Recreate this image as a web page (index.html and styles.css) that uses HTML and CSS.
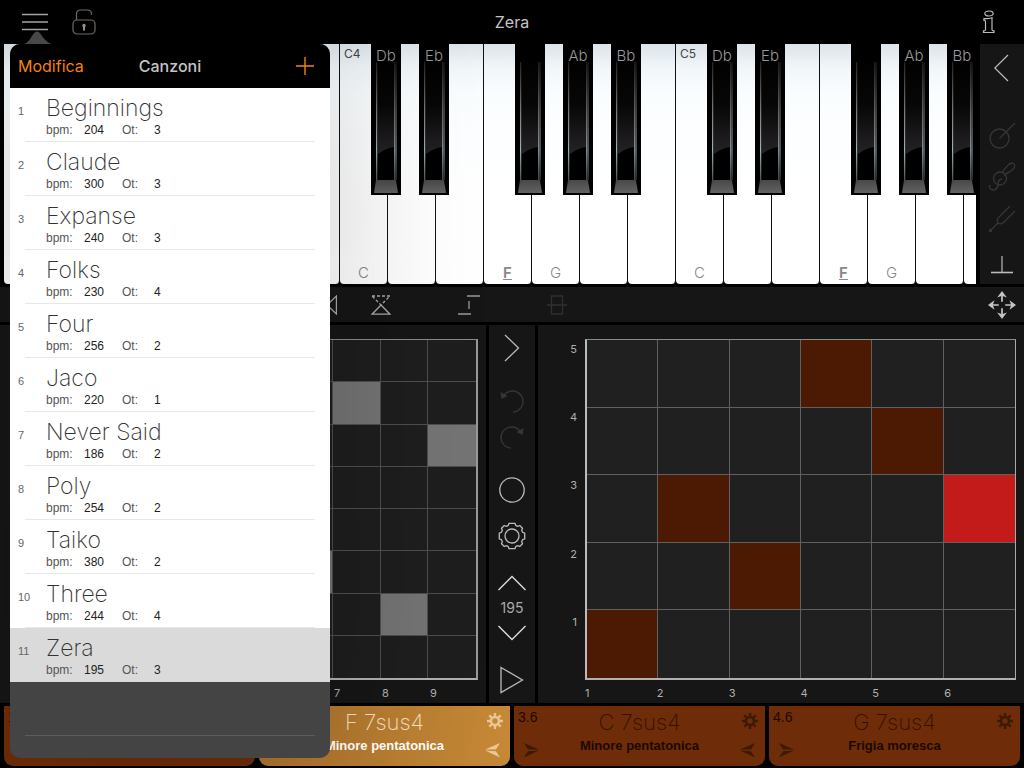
FILE: index.html
```html
<!DOCTYPE html>
<html lang="it">
<head>
<meta charset="utf-8">
<meta name="viewport" content="width=device-width, initial-scale=1">
<title>Zera</title>
<link rel="stylesheet" href="styles.css">
</head>
<body>
<svg class="defs" width="0" height="0" aria-hidden="true">
  <symbol id="cog" viewBox="0 0 16 16"><g fill="none" stroke="currentColor"><circle cx="8" cy="8" r="4" stroke-width="2.6"/><path stroke-width="2.4" d="M8 0v3M8 13v3M0 8h3M13 8h3M2.3 2.3l2.2 2.2M11.5 11.5l2.2 2.2M13.7 2.3l-2.2 2.2M4.5 11.5l-2.2 2.2"/></g></symbol>
  <symbol id="dart" viewBox="0 0 16 16"><path fill="currentColor" d="M0 1L15 7.500H4zM0 15.500L4 9.300L15 8.500z"/></symbol>
  <symbol id="ebony" viewBox="0 0 30 151" preserveAspectRatio="none">
    <path fill="#000" d="M0 0h30v151H0z"/>
    <path fill="url(#gloss)" d="M7 12h16v91q-8 1-16 7z"/>
    <path fill="url(#edge)" d="M5 18h1.300v118H5zM23.200 18h1.300v118h-1.300z"/>
    <path fill="url(#edge)" opacity=".5" d="M25 18h1v118h-1z"/>
    <path fill="url(#lip)" d="M5 136h20l2 13H3z"/>
  </symbol>
  <linearGradient id="gloss" x1="0" y1="0" x2="0" y2="1"><stop offset="0" stop-color="#000"/><stop offset=".5" stop-color="#070707"/><stop offset="1" stop-color="#262324"/></linearGradient>
  <linearGradient id="edge" x1="0" y1="0" x2="0" y2="1"><stop offset="0" stop-color="#222"/><stop offset=".4" stop-color="#777"/><stop offset=".75" stop-color="#9fb0b8"/><stop offset="1" stop-color="#4e5458"/></linearGradient>
  <linearGradient id="lip" x1="0" y1="0" x2="0" y2="1"><stop offset="0" stop-color="#494747"/><stop offset="1" stop-color="#636161"/></linearGradient>
</svg>

<header class="topbar">
  <div class="topbar-side">
    <button class="icon-button" aria-label="Menu"><svg width="26" height="18" viewBox="0 0 26 18"><path d="M0 1.500h26M0 9h26M0 16.500h26" stroke="#aaa" stroke-width="1.300"/></svg></button>
    <button class="icon-button" aria-label="Blocco"><svg width="24" height="26" viewBox="0 0 24 26" fill="none" stroke="#7d706c" stroke-width="1.200"><rect x="1" y="11" width="22" height="14" rx="4"/><path d="M4.500 11V5q0-4 4-4h7q4 0 4 4v0.800"/><path d="M12 17v4.500" stroke="#a39996" stroke-width="2"/><circle cx="12" cy="16.500" r="1.700" fill="#a39996" stroke="none"/></svg></button>
  </div>
  <h1 class="topbar-title">Zera</h1>
  <div class="topbar-side topbar-end">
    <button class="icon-button" aria-label="Info"><svg width="14" height="24" viewBox="0 0 14 24" fill="none" stroke="#bbb" stroke-width="1.200"><ellipse cx="7" cy="3.500" rx="4.200" ry="2.500"/><path d="M2 8.500q4 .5 8-.8v12q0 1 2 1.200v1.600H1.500v-1.600q2-.2 2-1.200v-8.200q0-1.200-1.700-1.300z"/></svg></button>
  </div>
</header>

<section class="keys-row">
  <div class="keyboard">
    <div class="key"></div>
    <div class="key"><svg class="black"><use href="#ebony"/></svg></div>
    <div class="key"><svg class="black"><use href="#ebony"/></svg></div>
    <div class="key"></div>
    <div class="key"><svg class="black"><use href="#ebony"/></svg></div>
    <div class="key"><svg class="black"><use href="#ebony"/></svg></div>
    <div class="key"><svg class="black"><use href="#ebony"/></svg></div>
    <div class="key"><span class="octave">C4</span><span class="note">C</span></div>
    <div class="key"><svg class="black"><use href="#ebony"/></svg><span class="sharp">Db</span></div>
    <div class="key"><svg class="black"><use href="#ebony"/></svg><span class="sharp">Eb</span></div>
    <div class="key"><span class="note root">F</span></div>
    <div class="key"><svg class="black"><use href="#ebony"/></svg><span class="note">G</span></div>
    <div class="key"><svg class="black"><use href="#ebony"/></svg><span class="sharp">Ab</span></div>
    <div class="key"><svg class="black"><use href="#ebony"/></svg><span class="sharp">Bb</span></div>
    <div class="key"><span class="octave">C5</span><span class="note">C</span></div>
    <div class="key"><svg class="black"><use href="#ebony"/></svg><span class="sharp">Db</span></div>
    <div class="key"><svg class="black"><use href="#ebony"/></svg><span class="sharp">Eb</span></div>
    <div class="key"><span class="note root">F</span></div>
    <div class="key"><svg class="black"><use href="#ebony"/></svg><span class="note">G</span></div>
    <div class="key"><svg class="black"><use href="#ebony"/></svg><span class="sharp">Ab</span></div>
    <div class="key"><svg class="black"><use href="#ebony"/></svg><span class="sharp">Bb</span></div>
  </div>
  <nav class="side-tools" aria-label="Strumenti">
    <button class="tool tool-first" aria-label="Indietro"><svg width="16" height="28" viewBox="0 0 16 28" fill="none" stroke="#bbb" stroke-width="1.300"><path d="M14 1L.8 14L14 27"/></svg></button>
    <button class="tool" aria-label="Percussioni"><svg width="28" height="28" viewBox="0 0 28 28" fill="none" stroke="#363636" stroke-width="1.300"><circle cx="11.500" cy="17.500" r="9.500"/><path d="M11.500 17.500L27 2"/></svg></button>
    <button class="tool" aria-label="Basso"><svg width="28" height="30" viewBox="0 0 28 30" fill="none" stroke="#363636" stroke-width="1.300"><circle cx="12" cy="16.500" r="6.500"/><path d="M14.500 10.500q1-3 4-5.500q3-4 6-4q3 1 2 4q-1 3-5 5q-4 1-5 4"/><path d="M14 17q-4 0-4 6q-1 5-5 5q-5-1-3-5"/></svg></button>
    <button class="tool" aria-label="Accordatura"><svg width="28" height="28" viewBox="0 0 28 28" fill="none" stroke="#363636" stroke-width="1.300"><path d="M2 26l8-8M22 1L11 12q-3 3-1 6q3 2 6-1L27 6"/><circle cx="2.500" cy="25.500" r="1"/></svg></button>
    <button class="tool tool-last" aria-label="Base"><svg width="22" height="18" viewBox="0 0 22 18" fill="none" stroke="#bbb"><path d="M11 0v16" stroke-width="1.200"/><path d="M0 16.500h22" stroke-width="1.600"/></svg></button>
  </nav>
</section>

<div class="toolbar">
  <div class="toolbar-group">
    <button class="tool-inline" aria-label="Specchia"><svg width="20" height="20" viewBox="0 0 20 20" fill="none" stroke="#aaa" stroke-width="1.200"><path d="M19.400 1v18L10 10z"/><path d="M10 10L.6 1v18z" stroke-dasharray="2 2"/></svg></button>
    <button class="tool-inline" aria-label="Capovolgi"><svg width="20" height="20" viewBox="0 0 20 20" fill="none" stroke="#aaa" stroke-width="1.300"><path d="M1 19.200h18L10 10z"/><path d="M1 1h18L10 10z" stroke-dasharray="3 2"/></svg></button>
  </div>
  <button class="tool-inline" aria-label="Gradino"><svg width="22" height="20" viewBox="0 0 22 20" stroke="#999" stroke-width="1.300"><path d="M9 1h13M0 19h13M11 6v8"/></svg></button>
  <button class="tool-inline" aria-label="Centra"><svg width="20" height="20" viewBox="0 0 20 20" fill="none" stroke="#303030" stroke-width="1.300"><path d="M4.500 1h11v18h-11zM0 10h20"/></svg></button>
  <button class="tool-inline toolbar-last" aria-label="Sposta"><svg width="28" height="28" viewBox="0 0 26 26"><path d="M13 3v7M13 16v7M3 13h7M16 13h7" stroke="#c4c4c4" stroke-width="1.600"/><path fill="#c4c4c4" d="M13 0l4.500 6L13 4.500L8.500 6zM13 26l4.500-6L13 21.500L8.500 20zM0 13l6-4.500L4.500 13L6 17.500zM26 13l-6-4.500L21.500 13L20 17.500z"/></svg></button>
</div>

<main class="editor">
  <section class="panel pattern">
    <div class="grid grid-left">
      <i></i><i></i><i></i><i></i><i></i><i></i><i></i><i></i><i></i>
      <i></i><i></i><i></i><i></i><i></i><i></i><i class="grey"></i><i></i><i></i>
      <i></i><i></i><i></i><i></i><i></i><i></i><i></i><i></i><i class="grey"></i>
      <i></i><i></i><i></i><i></i><i></i><i></i><i></i><i></i><i></i>
      <i></i><i></i><i></i><i></i><i></i><i></i><i></i><i></i><i></i>
      <i></i><i></i><i></i><i></i><i></i><i class="grey"></i><i></i><i></i><i></i>
      <i></i><i></i><i></i><i></i><i></i><i></i><i></i><i class="grey"></i><i></i>
      <i></i><i></i><i></i><i></i><i></i><i></i><i></i><i></i><i></i>
    </div>
    <div class="x-axis"><span>1</span><span>2</span><span>3</span><span>4</span><span>5</span><span>6</span><span>7</span><span>8</span><span>9</span></div>
  </section>

  <section class="panel transport">
    <button class="t-large" aria-label="Avanti"><svg width="16" height="28" viewBox="0 0 16 28" fill="none" stroke="#bbb" stroke-width="1.300"><path d="M1 1l13.500 13L1 27"/></svg></button>
    <div class="t-group">
      <button class="t-medium" aria-label="Annulla"><svg width="24" height="24" viewBox="0 0 24 24" fill="none" stroke="#363636" stroke-width="1.400"><path d="M3.500 7A10.500 10.500 0 1 1 13 23"/><path d="M.5 3l1 7l6-3z" fill="#363636" stroke="none"/></svg></button>
      <button class="t-medium" aria-label="Ripristina"><svg width="24" height="24" viewBox="0 0 24 24" fill="none" stroke="#363636" stroke-width="1.400"><path d="M20.500 7A10.500 10.500 0 1 0 11 23"/><path d="M23.500 3l-1 7l-6-3z" fill="#363636" stroke="none"/></svg></button>
    </div>
    <div class="t-group">
      <button class="t-large" aria-label="Registra"><svg width="26" height="26" viewBox="0 0 26 26" fill="none" stroke="#bbb" stroke-width="1.300"><circle cx="13" cy="13" r="12.200"/></svg></button>
      <button class="t-large" aria-label="Impostazioni"><svg width="28" height="28" viewBox="-14 -14 28 28" fill="none" stroke="#bbb" stroke-width="1.300"><circle r="7"/><path d="M-3-12.700L3-12.700L3.700-10.600L5.700-9.700L7.700-10.500L10.500-7.700L9.700-5.700L10.600-3.700L12.700-3L12.700 3L10.600 3.700L9.700 5.700L10.500 7.700L7.700 10.500L5.700 9.700L3.700 10.600L3 12.700L-3 12.700L-3.700 10.600L-5.700 9.700L-7.700 10.500L-10.500 7.700L-9.700 5.700L-10.600 3.700L-12.700 3L-12.700-3L-10.600-3.700L-9.700-5.700L-10.500-7.700L-7.700-10.500L-5.700-9.700L-3.700-10.600z" stroke-linejoin="round"/></svg></button>
    </div>
    <div class="t-group">
      <button class="t-small" aria-label="Aumenta"><svg width="28" height="16" viewBox="0 0 28 16" fill="none" stroke="#ddd" stroke-width="1.400"><path d="M.5 15L14 1.500L27.500 15"/></svg></button>
      <output class="tempo">195</output>
      <button class="t-small" aria-label="Diminuisci"><svg width="28" height="16" viewBox="0 0 28 16" fill="none" stroke="#ddd" stroke-width="1.400"><path d="M.5 1L14 14.500L27.500 1"/></svg></button>
    </div>
    <button class="t-large" aria-label="Riproduci"><svg width="24" height="28" viewBox="0 0 24 28" fill="none" stroke="#bbb" stroke-width="1.300"><path d="M1 1.500l21.500 12.500L1 26.500z"/></svg></button>
  </section>

  <section class="panel melody">
    <div class="y-axis"><span>5</span><span>4</span><span>3</span><span>2</span><span>1</span></div>
    <div class="grid grid-right">
      <i></i><i></i><i></i><i class="rust"></i><i></i><i></i>
      <i></i><i></i><i></i><i></i><i class="rust"></i><i></i>
      <i></i><i class="rust"></i><i></i><i></i><i></i><i class="red"></i>
      <i></i><i></i><i class="rust"></i><i></i><i></i><i></i>
      <i class="rust"></i><i></i><i></i><i></i><i></i><i></i>
    </div>
    <div class="x-axis"><span>1</span><span>2</span><span>3</span><span>4</span><span>5</span><span>6</span></div>
  </section>
</main>

<footer class="pads">
  <article class="pad"><span class="pad-beat">1.6</span></article>
  <article class="pad active">
    <span class="pad-beat"></span><h2 class="pad-chord">F 7sus4</h2><svg class="pad-cog"><use href="#cog"/></svg>
    <span></span><p class="pad-scale">Minore pentatonica</p><svg class="pad-dart flip"><use href="#dart"/></svg>
  </article>
  <article class="pad">
    <span class="pad-beat">3.6</span><h2 class="pad-chord">C 7sus4</h2><svg class="pad-cog"><use href="#cog"/></svg>
    <svg class="pad-dart"><use href="#dart"/></svg><p class="pad-scale">Minore pentatonica</p><svg class="pad-dart flip"><use href="#dart"/></svg>
  </article>
  <article class="pad">
    <span class="pad-beat">4.6</span><h2 class="pad-chord">G 7sus4</h2><svg class="pad-cog"><use href="#cog"/></svg>
    <svg class="pad-dart"><use href="#dart"/></svg><p class="pad-scale">Frigia moresca</p>
  </article>
</footer>

<aside class="popover" aria-label="Canzoni">
  <svg class="popover-arrow" viewBox="0 0 28 13"><path fill="#484848" d="M0 13Q4 12 8 5Q13-4 18 5Q23 12 28 13z"/></svg>
  <div class="popover-body">
    <div class="popover-head">
      <button class="edit">Modifica</button>
      <h2 class="popover-title">Canzoni</h2>
      <button class="add" aria-label="Aggiungi"><svg width="18" height="18" viewBox="0 0 18 18" stroke="#f5820e" stroke-width="1.400"><path d="M9 0v18M0 9h18"/></svg></button>
    </div>
    <ol class="songs">
      <li class="song"><span class="num">1</span><div class="info"><h3 class="name">Beginnings</h3><p class="meta"><span>bpm:</span><b>204</b><span>Ot:</span><b>3</b></p></div></li>
      <li class="song"><span class="num">2</span><div class="info"><h3 class="name">Claude</h3><p class="meta"><span>bpm:</span><b>300</b><span>Ot:</span><b>3</b></p></div></li>
      <li class="song"><span class="num">3</span><div class="info"><h3 class="name">Expanse</h3><p class="meta"><span>bpm:</span><b>240</b><span>Ot:</span><b>3</b></p></div></li>
      <li class="song"><span class="num">4</span><div class="info"><h3 class="name">Folks</h3><p class="meta"><span>bpm:</span><b>230</b><span>Ot:</span><b>4</b></p></div></li>
      <li class="song"><span class="num">5</span><div class="info"><h3 class="name">Four</h3><p class="meta"><span>bpm:</span><b>256</b><span>Ot:</span><b>2</b></p></div></li>
      <li class="song"><span class="num">6</span><div class="info"><h3 class="name">Jaco</h3><p class="meta"><span>bpm:</span><b>220</b><span>Ot:</span><b>1</b></p></div></li>
      <li class="song"><span class="num">7</span><div class="info"><h3 class="name">Never Said</h3><p class="meta"><span>bpm:</span><b>186</b><span>Ot:</span><b>2</b></p></div></li>
      <li class="song"><span class="num">8</span><div class="info"><h3 class="name">Poly</h3><p class="meta"><span>bpm:</span><b>254</b><span>Ot:</span><b>2</b></p></div></li>
      <li class="song"><span class="num">9</span><div class="info"><h3 class="name">Taiko</h3><p class="meta"><span>bpm:</span><b>380</b><span>Ot:</span><b>2</b></p></div></li>
      <li class="song"><span class="num">10</span><div class="info"><h3 class="name">Three</h3><p class="meta"><span>bpm:</span><b>244</b><span>Ot:</span><b>4</b></p></div></li>
      <li class="song selected"><span class="num">11</span><div class="info"><h3 class="name">Zera</h3><p class="meta"><span>bpm:</span><b>195</b><span>Ot:</span><b>3</b></p></div></li>
      <li class="blank"></li>
    </ol>
  </div>
</aside>
</body>
</html>
```
FILE: styles.css
```css
* { box-sizing: border-box; }

body {
  margin: 0;
  min-height: 100vh;
  position: relative;
  display: flex;
  flex-direction: column;
  overflow-x: hidden;
  background: #000;
  color: #c4c4c4;
  font-family: "Liberation Sans", Arial, sans-serif;
  font-size: 12px;
}

h1, h2, h3, p, ol { margin: 0; padding: 0; font-weight: 400; }

button {
  display: grid;
  place-items: center;
  padding: 0;
  border: 0;
  background: none;
  color: inherit;
  font: inherit;
}

svg { display: block; }
.defs { position: absolute; }

/* top bar */
.topbar {
  height: 44px;
  display: grid;
  grid-template-columns: 1fr auto 1fr;
  align-items: center;
  padding: 0 13px;
}
.topbar-side { display: flex; gap: 5px; }
.topbar-end { justify-content: flex-end; }
.icon-button { width: 44px; height: 44px; }
.topbar-title { font: 400 16px/22px Inter, sans-serif; }

/* keyboard */
.keys-row { display: flex; height: 243px; padding: 0 0 3px 4px; gap: 4px; }
.keyboard { flex: 1; min-width: 0; display: flex; overflow: hidden; }
.key {
  position: relative;
  flex: 0 0 48px;
  border-right: 1px solid #111;
  border-radius: 0 0 4px 4px;
  background: linear-gradient(#dce4ea, #f1f6f9 24px, #fafdff 50px, #fff 140px);
}
.black { position: absolute; z-index: 1; top: 0; left: -17px; width: 30px; height: 151px; }
.octave { position: absolute; top: 3px; left: 4px; font: 12px/14px Inter, sans-serif; color: #444; }
.sharp {
  position: absolute;
  z-index: 2;
  top: 3px;
  left: -17px;
  width: 30px;
  text-align: center;
  font: 300 15px/18px Inter, sans-serif;
  color: #999;
}
.note {
  position: absolute;
  bottom: 2px;
  left: 0;
  width: 100%;
  text-align: center;
  font: 300 15px/18px Inter, sans-serif;
  color: #888;
}
.root { font-weight: 600; text-decoration: underline; }

.side-tools { width: 44px; background: #161616; }
.tool { width: 44px; height: 42px; }
.tool-first { height: 48px; margin-bottom: 22px; }
.tool-last { padding-top: 8px; }

/* tool bar */
.toolbar {
  height: 35px;
  display: flex;
  align-items: center;
  gap: 44px;
  padding-left: 305px;
  background: #161616;
}
.toolbar-group { display: flex; gap: 10px; }
.tool-inline { width: 44px; height: 35px; }
.toolbar-last { margin-left: auto; }

/* editor panels */
.editor {
  flex: 1;
  display: grid;
  grid-template-columns: minmax(0, 1fr) 46px minmax(0, 1fr);
  gap: 3px;
  padding: 3px 0;
}
.panel { background: #161616; }
.pattern, .melody { display: grid; grid-template-rows: 1fr 23px; padding-top: 14px; }
.pattern { padding-left: 46px; padding-right: 8px; }
.melody { grid-template-columns: 47px 1fr; padding-right: 8px; }

.grid { display: grid; background: #1e1e1e; border: 1px solid #8a8a8a; border-bottom: 2px solid #b0b0b0; }
.grid-left { grid-template: repeat(8, 1fr) / repeat(9, 1fr); border-right: 2px solid #999; }
.grid-right { grid-template: repeat(5, 1fr) / repeat(6, 1fr); background: #202020; border-left: 2px solid #bbb; border-right-color: #aaa; }
.grid i { border-right: 1px solid #606060; border-bottom: 1px solid #606060; }
.grid-left i { border-color: #4e4e4e; }
.grid-left i:nth-child(9n), .grid-right i:nth-child(6n) { border-right: 0; }
.grid-left i:nth-last-child(-n+9), .grid-right i:nth-last-child(-n+6) { border-bottom: 0; }
.grid .grey { background: #747474; }
.grid .rust { background: #4c1903; }
.grid .red { background: #c31a1a; }

.y-axis { display: grid; grid-template-rows: repeat(5, 1fr); justify-items: end; padding-right: 8px; }
.y-axis span { padding-top: 2px; }
.x-axis { display: grid; grid-auto-flow: column; grid-auto-columns: 1fr; align-items: center; padding-top: 2px; }
.melody .x-axis { grid-column: 2; }
.x-axis, .y-axis { font: 11px/16px Inter, sans-serif; color: #b0b0b0; }

.transport { display: flex; flex-direction: column; justify-content: space-between; }
.transport button { width: 46px; }
.t-large { height: 46px; }
.t-medium { height: 36px; }
.t-small { height: 24px; }
.tempo { display: block; text-align: center; font: 400 14px/26px Inter, sans-serif; color: #aaa; }

/* chord pads */
.pads { display: grid; grid-template-columns: repeat(4, 1fr); gap: 4px; padding: 0 4px 2px; }
.pad {
  height: 60px;
  display: grid;
  grid-template: 32px 28px / 36px 1fr 36px;
  justify-items: center;
  border-radius: 0 0 9px 9px;
  background: #6f2c08;
  color: #1c0900;
}
.active { background: linear-gradient(90deg, #ac722c, #c48836); color: #fff; }
.pad-beat { justify-self: start; padding: 3px 0 0 4px; font: 14px/16px "Liberation Sans", sans-serif; }
.pad-chord { font: 200 22px/32px Inter, sans-serif; color: #321303; }
.active .pad-chord { color: #f7e3c5; }
.pad-scale { font-size: 13px; font-weight: 700; line-height: 15px; }
.pad-cog { width: 16px; height: 16px; margin-top: 7px; margin-right: -6px; color: #3d1a06; }
.pad-dart { width: 16px; height: 16px; margin-top: 4px; color: #3d1a06; }
.active .pad-cog, .active .pad-dart { color: #e8c793; }
.flip { transform: scaleX(-1); }

/* song popover */
.popover { position: absolute; z-index: 5; top: 44px; left: 10px; bottom: 10px; width: 320px; }
.popover-arrow { position: absolute; z-index: 1; left: 14px; bottom: 100%; width: 28px; height: 13px; }
.popover-body {
  height: 100%;
  overflow: hidden;
  border-radius: 10px;
  background: #444;
  box-shadow: 0 0 160px rgba(0, 0, 0, .2);
}
.popover-head {
  height: 44px;
  display: grid;
  grid-template-columns: 1fr auto 1fr;
  align-items: center;
  padding: 0 8px;
  background: #000;
  font: 400 16px/20px Inter, sans-serif;
}
.edit { justify-self: start; color: #f5820e; }
.popover-title { font-size: 16px; font-weight: 500; }
.add { justify-self: end; padding-right: 8px; }
.songs { list-style: none; }
.song { position: relative; display: flex; height: 54px; padding: 0 15px 0 8px; background: #fff; color: #444; }
.song::after, .blank::after {
  content: "";
  position: absolute;
  left: 15px;
  right: 15px;
  bottom: 0;
  height: 1px;
  background: #e8e8e8;
}
.num { width: 28px; padding-top: 17px; font-size: 11px; line-height: 12px; color: #666; }
.info { padding-top: 6px; }
.name { font: 200 23px/28px Inter, sans-serif; color: #333; }
.meta { display: flex; font-size: 12px; line-height: 16px; color: #555; }
.meta b { font-weight: 400; color: #222; }
.meta span { width: 38px; }
.meta b + span { width: 32px; }
.meta b:nth-child(2) { width: 38px; }
.selected { background: #dadada; }
.selected::after { display: none; }
.blank { position: relative; height: 54px; }
.blank::after { background: #5c5c5c; }
```
